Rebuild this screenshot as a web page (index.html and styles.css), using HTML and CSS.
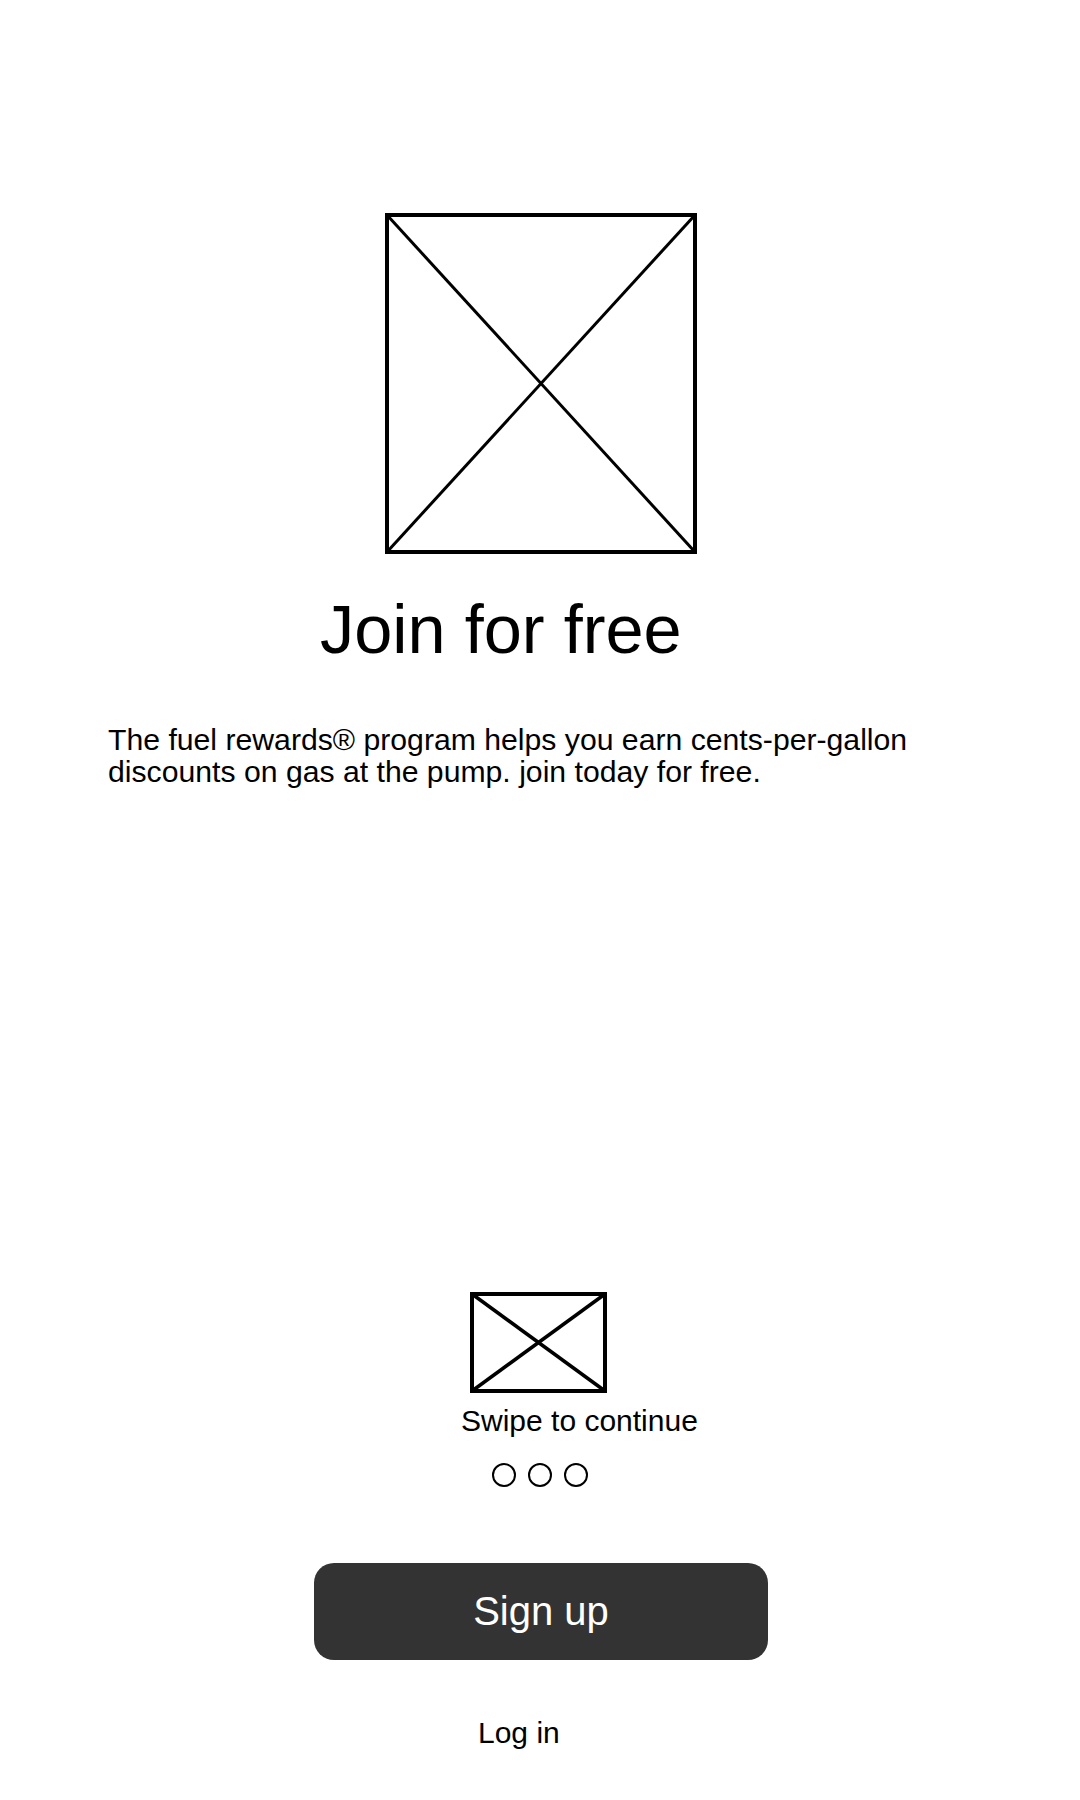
FILE: index.html
```html
<!DOCTYPE html>
<html>
<head>
<meta charset="utf-8">
<link rel="stylesheet" href="styles.css">
</head>
<body>
<div class="screen">
  <svg class="hero" width="312" height="341" viewBox="0 0 312 341">
    <rect x="2" y="2" width="308" height="337" fill="none" stroke="#000" stroke-width="4"/>
    <line x1="2" y1="2" x2="310" y2="339" stroke="#000" stroke-width="3"/>
    <line x1="310" y1="2" x2="2" y2="339" stroke="#000" stroke-width="3"/>
  </svg>
  <h1 class="title">Join for free</h1>
  <p class="desc">The fuel rewards® program helps you earn cents-per-gallon discounts on gas at the pump. join today for free.</p>
  <div class="spacer"></div>
  <svg class="swipe-img" width="137" height="101" viewBox="0 0 137 101">
    <rect x="2" y="2" width="133" height="97" fill="none" stroke="#000" stroke-width="4"/>
    <line x1="2" y1="2" x2="135" y2="99" stroke="#000" stroke-width="3.5"/>
    <line x1="135" y1="2" x2="2" y2="99" stroke="#000" stroke-width="3.5"/>
  </svg>
  <div class="swipe-text">Swipe to continue</div>
  <div class="dots">
    <span class="dot"></span>
    <span class="dot"></span>
    <span class="dot"></span>
  </div>
  <div class="signup">Sign up</div>
  <div class="login">Log in</div>
</div>
</body>
</html>
```
FILE: styles.css
```css
html, body {
  margin: 0;
  padding: 0;
  background: #fff;
}
body {
  font-family: "Liberation Sans", Arial, sans-serif;
  color: #000;
}
.screen {
  width: 1080px;
  height: 1800px;
  display: flex;
  flex-direction: column;
  align-items: flex-start;
  padding-top: 213px;
  box-sizing: border-box;
}
.hero {
  display: block;
  margin-left: 385px;
}
.title {
  margin: 37px 0 0 320px;
  font-size: 68.5px;
  font-weight: normal;
  line-height: 78px;
}
.desc {
  margin: 55px 0 0 108px;
  width: 830px;
  font-size: 30.2px;
  line-height: 32px;
}
.spacer {
  height: 504px;
}
.swipe-img {
  display: block;
  margin-left: 470px;
}
.swipe-text {
  margin: 11px 0 0 461px;
  font-size: 30px;
  line-height: 34px;
}
.dots {
  display: flex;
  gap: 12px;
  margin: 25px 0 0 492px;
}
.dot {
  width: 24px;
  height: 24px;
  box-sizing: border-box;
  border: 2px solid #000;
  border-radius: 50%;
}
.signup {
  margin: 76px 0 0 314px;
  width: 454px;
  height: 97px;
  border-radius: 20px;
  background: #333333;
  color: #fff;
  font-size: 40px;
  display: flex;
  align-items: center;
  justify-content: center;
}
.login {
  margin: 56px 0 0 478px;
  font-size: 30px;
  line-height: 34px;
}
```
